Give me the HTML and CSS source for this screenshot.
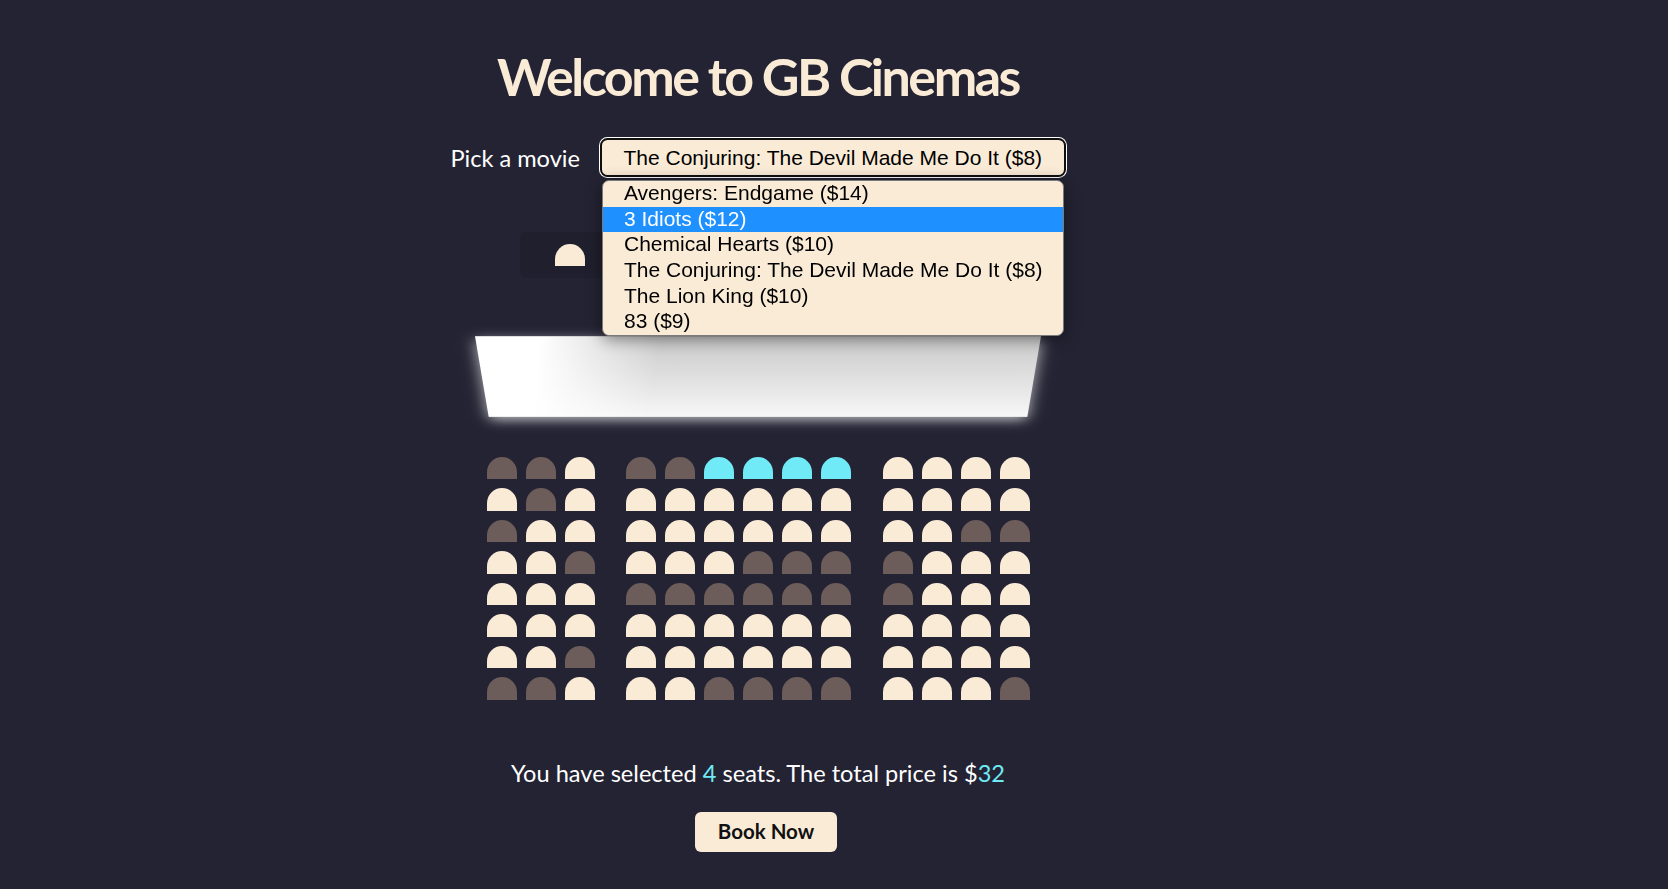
FILE: index.html
```html
<!DOCTYPE html>
<html lang="en">
<head>
<meta charset="UTF-8">
<title>GB Cinemas</title>
<link rel="stylesheet" href="styles.css">
</head>
<body>
  <h1 class="title">Welcome to GB Cinemas</h1>

  <div class="movie-container">
    <label class="movie-label">Pick a movie</label>
    <div class="select-wrap">
      <div class="select">The Conjuring: The Devil Made Me Do It ($8)</div>
      <ul class="dropdown">
        <li class="option">Avengers: Endgame ($14)</li>
        <li class="option active">3 Idiots ($12)</li>
        <li class="option">Chemical Hearts ($10)</li>
        <li class="option">The Conjuring: The Devil Made Me Do It ($8)</li>
        <li class="option">The Lion King ($10)</li>
        <li class="option">83 ($9)</li>
      </ul>
    </div>
  </div>

  <ul class="showcase">
    <li class="showcase-item"><div class="mini-seat"></div></li>
    <li class="showcase-item"><div class="mini-seat sel"></div></li>
    <li class="showcase-item"><div class="mini-seat occ"></div></li>
  </ul>

  <div class="container">
    <div class="screen"></div>

    <div class="row">
      <div class="seat occ"></div><div class="seat occ"></div><div class="seat"></div>
      <div class="seat occ"></div><div class="seat occ"></div><div class="seat sel"></div><div class="seat sel"></div><div class="seat sel"></div><div class="seat sel"></div>
      <div class="seat"></div><div class="seat"></div><div class="seat"></div><div class="seat"></div>
    </div>
    <div class="row">
      <div class="seat"></div><div class="seat occ"></div><div class="seat"></div>
      <div class="seat"></div><div class="seat"></div><div class="seat"></div><div class="seat"></div><div class="seat"></div><div class="seat"></div>
      <div class="seat"></div><div class="seat"></div><div class="seat"></div><div class="seat"></div>
    </div>
    <div class="row">
      <div class="seat occ"></div><div class="seat"></div><div class="seat"></div>
      <div class="seat"></div><div class="seat"></div><div class="seat"></div><div class="seat"></div><div class="seat"></div><div class="seat"></div>
      <div class="seat"></div><div class="seat"></div><div class="seat occ"></div><div class="seat occ"></div>
    </div>
    <div class="row">
      <div class="seat"></div><div class="seat"></div><div class="seat occ"></div>
      <div class="seat"></div><div class="seat"></div><div class="seat"></div><div class="seat occ"></div><div class="seat occ"></div><div class="seat occ"></div>
      <div class="seat occ"></div><div class="seat"></div><div class="seat"></div><div class="seat"></div>
    </div>
    <div class="row">
      <div class="seat"></div><div class="seat"></div><div class="seat"></div>
      <div class="seat occ"></div><div class="seat occ"></div><div class="seat occ"></div><div class="seat occ"></div><div class="seat occ"></div><div class="seat occ"></div>
      <div class="seat occ"></div><div class="seat"></div><div class="seat"></div><div class="seat"></div>
    </div>
    <div class="row">
      <div class="seat"></div><div class="seat"></div><div class="seat"></div>
      <div class="seat"></div><div class="seat"></div><div class="seat"></div><div class="seat"></div><div class="seat"></div><div class="seat"></div>
      <div class="seat"></div><div class="seat"></div><div class="seat"></div><div class="seat"></div>
    </div>
    <div class="row">
      <div class="seat"></div><div class="seat"></div><div class="seat occ"></div>
      <div class="seat"></div><div class="seat"></div><div class="seat"></div><div class="seat"></div><div class="seat"></div><div class="seat"></div>
      <div class="seat"></div><div class="seat"></div><div class="seat"></div><div class="seat"></div>
    </div>
    <div class="row">
      <div class="seat occ"></div><div class="seat occ"></div><div class="seat"></div>
      <div class="seat"></div><div class="seat"></div><div class="seat occ"></div><div class="seat occ"></div><div class="seat occ"></div><div class="seat occ"></div>
      <div class="seat"></div><div class="seat"></div><div class="seat"></div><div class="seat occ"></div>
    </div>
  </div>

  <p class="text">You have selected <span class="hl">4</span> seats. The total price is $<span class="hl">32</span></p>

  <button class="book-btn">Book Now</button>
</body>
</html>
```

FILE: styles.css
```css
* {
  box-sizing: border-box;
}

html,
body {
  margin: 0;
}

body {
  background-color: #242333;
  color: #fff;
  font-family: Lato, "Noto Sans", sans-serif;
  display: flex;
  flex-direction: column;
  align-items: center;
  min-height: 889px;
  padding: 45px 152px 0 0;
}

.title {
  margin: 0;
  font-size: 52px;
  line-height: 62.4px;
  font-weight: 700;
  letter-spacing: -2.5px;
  color: #faebd7;
}

.movie-container {
  margin-top: 30.6px;
  display: flex;
  align-items: center;
  gap: 20px;
}

.movie-label {
  font-size: 23.6px;
  color: #fff;
}

.select-wrap {
  position: relative;
}

.select {
  height: 39px;
  display: flex;
  align-items: center;
  padding: 0 21.5px;
  background-color: #faebd7;
  color: #000;
  border: 2px solid #101010;
  border-radius: 7.5px;
  box-shadow: 0 0 0 1px #fff;
  font-family: "Liberation Sans", Arial, sans-serif;
  font-size: 21px;
  white-space: nowrap;
}

.dropdown {
  position: absolute;
  top: 42px;
  left: 2px;
  right: 1.5px;
  margin: 0;
  padding: 0;
  list-style: none;
  background-color: #faebd7;
  border: 1px solid #7a7a7a;
  border-radius: 7px;
  overflow: hidden;
  box-shadow: 0 3px 16px rgba(0, 0, 0, 0.45);
  z-index: 10;
}

.option {
  height: 25.67px;
  line-height: 24.67px;
  padding-left: 21px;
  color: #000;
  font-family: "Liberation Sans", Arial, sans-serif;
  font-size: 21px;
  white-space: nowrap;
}

.option.active {
  background-color: #1e90ff;
  color: #fff;
}

.showcase {
  margin: 54.7px 0 0;
  width: 476px;
  padding: 7.5px 15px;
  list-style: none;
  display: flex;
  justify-content: space-between;
  background: rgba(0, 0, 0, 0.1);
  border-radius: 7.5px;
  color: #777;
}

.showcase-item {
  display: flex;
  align-items: center;
  margin: 0 15px;
}

.mini-seat {
  width: 30px;
  height: 22.5px;
  margin: 4.5px;
  background-color: #faebd7;
  border-radius: 15px 15px 0 0;
}

.container {
  margin-top: 24px;
  perspective: 1500px;
}

.screen {
  height: 105px;
  width: 100%;
  margin: 22.5px 0;
  transform: rotateX(-45deg);
  background:
    linear-gradient(100deg, #ffffff 0%, #ffffff 11%, rgba(255, 255, 255, 0) 32%),
    linear-gradient(to bottom, #c9c9c9 0%, #e2e2e2 55%, #f7f7f7 100%);
  box-shadow: 0 4.5px 15px rgba(255, 255, 255, 0.7);
}

.row {
  display: flex;
}

.seat {
  width: 30px;
  height: 22.5px;
  margin: 4.5px;
  background-color: #faebd7;
  border-radius: 15px 15px 0 0;
}

.seat.occ,
.mini-seat.occ {
  background-color: #6c5c5a;
}

.seat.sel,
.mini-seat.sel {
  background-color: #6feaf6;
}

.seat:nth-child(3) {
  margin-right: 27px;
}

.seat:nth-child(10) {
  margin-left: 27px;
}

.text {
  margin: 54.5px 0 0;
  font-size: 23.6px;
  line-height: 28.8px;
}

.hl {
  color: #6feaf6;
}

.book-btn {
  margin: 24.2px 0 0 16px;
  padding: 7.5px 22.5px;
  border: 0;
  border-radius: 6px;
  background-color: #faebd7;
  color: #111;
  font-family: Lato, "Noto Sans", sans-serif;
  font-size: 20.5px;
  font-weight: 700;
  line-height: 25px;
}
```
